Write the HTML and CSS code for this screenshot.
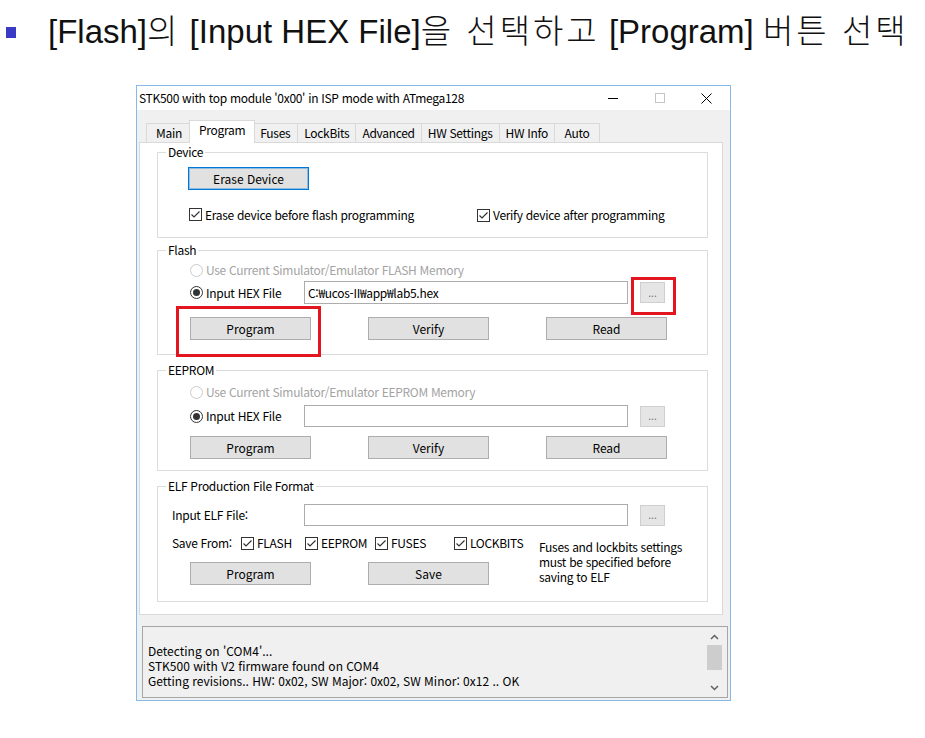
FILE: index.html
```html
<!DOCTYPE html>
<html lang="ko">
<head>
<meta charset="utf-8">
<title>STK500 Program</title>
<link rel="stylesheet" href="styles.css">
</head>
<body>
<div class="heading">
  <span class="bullet"></span>
  <span class="heading-text">[Flash]<span class="ko">의</span> [Input HEX File]<span class="ko">을 선택하고</span> [Program] <span class="ko">버튼 선택</span></span>
</div>

<div class="window">
  <div class="titlebar">
    <span class="title">STK500 with top module '0x00' in ISP mode with ATmega128</span>
    <span class="caption"><svg width="10" height="10" viewBox="0 0 10 10"><path d="M0 5.5H10" stroke="#000" stroke-width="1"/></svg></span>
    <span class="caption"><svg width="10" height="10" viewBox="0 0 10 10"><rect x="0.5" y="0.5" width="9" height="9" fill="none" stroke="#c4c4c4"/></svg></span>
    <span class="caption"><svg width="11" height="11" viewBox="0 0 11 11"><path d="M0.5 0.5L10.5 10.5M10.5 0.5L0.5 10.5" stroke="#000" stroke-width="1"/></svg></span>
  </div>

  <div class="client">
    <div class="tabs">
      <div class="tab">Main</div>
      <div class="tab active">Program</div>
      <div class="tab">Fuses</div>
      <div class="tab">LockBits</div>
      <div class="tab">Advanced</div>
      <div class="tab">HW Settings</div>
      <div class="tab">HW Info</div>
      <div class="tab">Auto</div>
    </div>

    <div class="panel">
      <!-- Device -->
      <div class="group group-device">
        <div class="group-title">Device</div>
        <button class="btn btn-default">Erase Device</button>
        <div class="check-row">
          <label class="check"><svg class="cb" width="13" height="13" viewBox="0 0 13 13"><rect x="0.5" y="0.5" width="12" height="12" fill="#fff" stroke="#333"/><path d="M2.5 6.5L5 9L10.5 3.5" fill="none" stroke="#333" stroke-width="1.2"/></svg>Erase device before flash programming</label>
          <label class="check check-verify"><svg class="cb" width="13" height="13" viewBox="0 0 13 13"><rect x="0.5" y="0.5" width="12" height="12" fill="#fff" stroke="#333"/><path d="M2.5 6.5L5 9L10.5 3.5" fill="none" stroke="#333" stroke-width="1.2"/></svg>Verify device after programming</label>
        </div>
      </div>

      <!-- Flash -->
      <div class="group group-flash">
        <div class="group-title">Flash</div>
        <div class="radio-row disabled"><svg class="rb" width="13" height="13" viewBox="0 0 13 13"><circle cx="6.5" cy="6.5" r="6" fill="#fff" stroke="#cacaca"/></svg>Use Current Simulator/Emulator FLASH Memory</div>
        <div class="file-row">
          <div class="radio-row file-label"><svg class="rb" width="13" height="13" viewBox="0 0 13 13"><circle cx="6.5" cy="6.5" r="6" fill="#fff" stroke="#333"/><circle cx="6.5" cy="6.5" r="3.5" fill="#333"/></svg>Input HEX File</div>
          <div class="input">C:₩ucos-II₩app₩lab5.hex</div>
          <button class="btn-dots">...</button>
        </div>
        <div class="btn-row">
          <button class="btn">Program</button>
          <button class="btn">Verify</button>
          <button class="btn">Read</button>
        </div>
        <div class="highlight hl-dots"></div>
        <div class="highlight hl-program"></div>
      </div>

      <!-- EEPROM -->
      <div class="group group-eeprom">
        <div class="group-title">EEPROM</div>
        <div class="radio-row disabled"><svg class="rb" width="13" height="13" viewBox="0 0 13 13"><circle cx="6.5" cy="6.5" r="6" fill="#fff" stroke="#cacaca"/></svg>Use Current Simulator/Emulator EEPROM Memory</div>
        <div class="file-row">
          <div class="radio-row file-label"><svg class="rb" width="13" height="13" viewBox="0 0 13 13"><circle cx="6.5" cy="6.5" r="6" fill="#fff" stroke="#333"/><circle cx="6.5" cy="6.5" r="3.5" fill="#333"/></svg>Input HEX File</div>
          <div class="input input-short"></div>
          <button class="btn-dots">...</button>
        </div>
        <div class="btn-row">
          <button class="btn">Program</button>
          <button class="btn">Verify</button>
          <button class="btn">Read</button>
        </div>
      </div>

      <!-- ELF -->
      <div class="group group-elf">
        <div class="group-title">ELF Production File Format</div>
        <div class="file-row elf-file">
          <div class="elf-label">Input ELF File:</div>
          <div class="input input-short"></div>
          <button class="btn-dots">...</button>
        </div>
        <div class="elf-bottom">
          <div class="elf-left">
            <div class="save-row">
              <span class="save-label">Save From:</span>
              <label class="check"><svg class="cb" width="13" height="13" viewBox="0 0 13 13"><rect x="0.5" y="0.5" width="12" height="12" fill="#fff" stroke="#333"/><path d="M2.5 6.5L5 9L10.5 3.5" fill="none" stroke="#333" stroke-width="1.2"/></svg>FLASH</label>
              <label class="check"><svg class="cb" width="13" height="13" viewBox="0 0 13 13"><rect x="0.5" y="0.5" width="12" height="12" fill="#fff" stroke="#333"/><path d="M2.5 6.5L5 9L10.5 3.5" fill="none" stroke="#333" stroke-width="1.2"/></svg>EEPROM</label>
              <label class="check"><svg class="cb" width="13" height="13" viewBox="0 0 13 13"><rect x="0.5" y="0.5" width="12" height="12" fill="#fff" stroke="#333"/><path d="M2.5 6.5L5 9L10.5 3.5" fill="none" stroke="#333" stroke-width="1.2"/></svg>FUSES</label>
              <label class="check"><svg class="cb" width="13" height="13" viewBox="0 0 13 13"><rect x="0.5" y="0.5" width="12" height="12" fill="#fff" stroke="#333"/><path d="M2.5 6.5L5 9L10.5 3.5" fill="none" stroke="#333" stroke-width="1.2"/></svg>LOCKBITS</label>
            </div>
            <div class="btn-row elf-btns">
              <button class="btn">Program</button>
              <button class="btn">Save</button>
            </div>
          </div>
          <div class="note">Fuses and lockbits settings<br>must be specified before<br>saving to ELF</div>
        </div>
      </div>
    </div>

    <div class="log">
      <div class="log-text">
        <div>Detecting on 'COM4'...</div>
        <div>STK500 with V2 firmware found on COM4</div>
        <div>Getting revisions.. HW: 0x02, SW Major: 0x02, SW Minor: 0x12 .. OK</div>
      </div>
      <div class="scrollbar">
        <div class="sb-arrow"><svg width="9" height="6" viewBox="0 0 9 6"><path d="M1 5L4.5 1.5L8 5" fill="none" stroke="#606060" stroke-width="1.5"/></svg></div>
        <div class="sb-thumb"></div>
        <div class="sb-space"></div>
        <div class="sb-arrow"><svg width="9" height="6" viewBox="0 0 9 6"><path d="M1 1L4.5 4.5L8 1" fill="none" stroke="#606060" stroke-width="1.5"/></svg></div>
      </div>
    </div>
  </div>
</div>
</body>
</html>
```

FILE: styles.css
```css
* { box-sizing: border-box; }

body {
  margin: 0;
  width: 925px;
  height: 738px;
  overflow: hidden;
  background: #fff;
  color: #000;
  font-family: "Noto Sans CJK KR", "Noto Sans", sans-serif;
  font-size: 12px;
  line-height: 16px;
  letter-spacing: -0.3px;
}

/* ---------- slide heading ---------- */
.heading {
  height: 85px;
  padding-bottom: 25px;
  display: flex;
  align-items: center;
}
.bullet {
  width: 10px;
  height: 11px;
  margin: 4px 0 0 6px;
  background: #3a3ac6;
}
.heading-text {
  margin-left: 32px;
  font-family: "Liberation Sans", "Noto Sans CJK KR", sans-serif;
  font-size: 33px;
  line-height: 40px;
  letter-spacing: 0;
  color: #111;
  white-space: nowrap;
}
.ko {
  font-family: "Noto Sans CJK KR", sans-serif;
  font-weight: 300;
  letter-spacing: 3px;
}

/* ---------- window ---------- */
.window {
  margin-left: 136px;
  width: 595px;
  height: 616px;
  border: 1px solid #86b8e8;
  background: #f0f0f0;
  display: flex;
  flex-direction: column;
}
.titlebar {
  height: 24px;
  background: #fff;
  display: flex;
  align-items: center;
  flex: none;
}
.title {
  flex: 1;
  padding-left: 2px;
  white-space: nowrap;
}
.caption {
  width: 47px;
  height: 24px;
  display: flex;
  align-items: center;
  justify-content: center;
}

.client {
  flex: 1;
  padding-left: 2px;
}

/* ---------- tabs ---------- */
.tabs {
  display: flex;
  align-items: flex-end;
  height: 32px;
  margin-left: 8px;
}
.tab {
  min-width: 46px;
  height: 19px;
  padding: 0 6px;
  line-height: 17px;
  text-align: center;
  border: 1px solid #d9d9d9;
  border-bottom: none;
  background: #f0f0f0;
  margin-left: -1px;
  white-space: nowrap;
}
.tab.active {
  position: relative;
  z-index: 1;
  height: 23px;
  margin: 0 -2px -1px -3px;
  padding: 0 9px;
  line-height: 18px;
  background: #fff;
}

.panel {
  width: 584px;
  height: 473px;
  background: #fff;
  border: 1px solid #d9d9d9;
  display: flow-root;
}

/* ---------- group boxes ---------- */
.group {
  position: relative;
  margin-left: 17px;
  width: 551px;
  border: 1px solid #dcdcdc;
}
.group-title {
  width: max-content;
  margin: -9px 0 0 8px;
  padding: 0 2px;
  background: #fff;
  line-height: 16px;
}
.group-device { margin-top: 9px; height: 86px; }
.group-flash  { margin-top: 12px; height: 105px; }
.group-eeprom { margin-top: 15px; height: 101px; }
.group-elf    { margin-top: 15px; height: 116px; }

/* ---------- buttons ---------- */
.btn {
  display: block;
  width: 121px;
  height: 23px;
  padding: 0;
  border: 1px solid #adadad;
  background: #e1e1e1;
  font: inherit;
  color: #000;
  line-height: 21px;
}
.btn-default {
  margin: 7px 0 0 30px;
  border-color: #0078d7;
  box-shadow: inset 0 0 0 1px rgba(0, 120, 215, 0.35);
}
.btn-row {
  display: flex;
  gap: 57px;
  padding-left: 32px;
}
.btn-dots {
  width: 25px;
  height: 21px;
  padding: 0;
  margin-left: 12px;
  border: 1px solid #cfcfcf;
  background: #e5e5e5;
  color: #7a7a7a;
  font: inherit;
  font-size: 10px;
  line-height: 16px;
}

/* ---------- check / radio ---------- */
.check {
  display: flex;
  align-items: center;
  white-space: nowrap;
}
.cb { flex: none; margin-right: 3px; }
.check-row {
  display: grid;
  grid-template-columns: 288px auto;
  margin-top: 16px;
  padding-left: 31px;
}
.check-verify { margin-top: 1px; }

.radio-row {
  display: flex;
  align-items: center;
  height: 16px;
  padding-left: 32px;
  white-space: nowrap;
}
.rb { flex: none; margin-right: 3px; }
.radio-row.disabled { color: #a3a3a3; }

.file-row {
  display: flex;
  align-items: center;
}
.file-label {
  width: 146px;
}
.input {
  width: 324px;
  height: 23px;
  border: 1px solid #acacac;
  background: #fff;
  padding-left: 3px;
  line-height: 21px;
}
.input-short { height: 22px; }

.group-flash .disabled { margin-top: 4px; }
.group-flash .file-row { margin-top: 3px; }
.group-flash .btn-row { margin-top: 13px; }

.group-eeprom .disabled { margin-top: 6px; }
.group-eeprom .file-row { margin-top: 5px; }
.group-eeprom .btn-row { margin-top: 9px; }

/* ---------- ELF ---------- */
.elf-file {
  margin-top: 10px;
  padding-left: 14px;
}
.elf-label { width: 132px; }
.elf-bottom {
  display: flex;
  margin-top: 9px;
}
.elf-left { width: 381px; }
.save-row {
  display: grid;
  grid-template-columns: 69px 64px 70px 79px auto;
  align-items: center;
  padding-left: 14px;
  height: 16px;
}
.elf-btns { margin-top: 11px; }
.note {
  padding-top: 4px;
  line-height: 15px;
  white-space: nowrap;
}

/* ---------- highlights ---------- */
.highlight {
  position: absolute;
  border: 3px solid #e3161f;
}
.hl-dots { left: 473px; top: 26px; width: 45px; height: 38px; }
.hl-program { left: 18px; top: 55px; width: 145px; height: 51px; }

/* ---------- log ---------- */
.log {
  margin: 11px 0 0 3px;
  width: 586px;
  height: 72px;
  border: 1px solid #a6a6a6;
  background: #f0f0f0;
  display: flex;
}
.log-text {
  flex: 1;
  padding: 16px 0 0 5px;
  line-height: 15px;
  letter-spacing: 0;
  white-space: nowrap;
}
.scrollbar {
  width: 17px;
  margin: 1px 4px 1px 0;
  display: flex;
  flex-direction: column;
}
.sb-arrow {
  height: 17px;
  display: flex;
  align-items: center;
  justify-content: center;
}
.sb-thumb {
  height: 25px;
  margin: 0 1px;
  background: #cdcdcd;
}
.sb-space { flex: 1; }
```
